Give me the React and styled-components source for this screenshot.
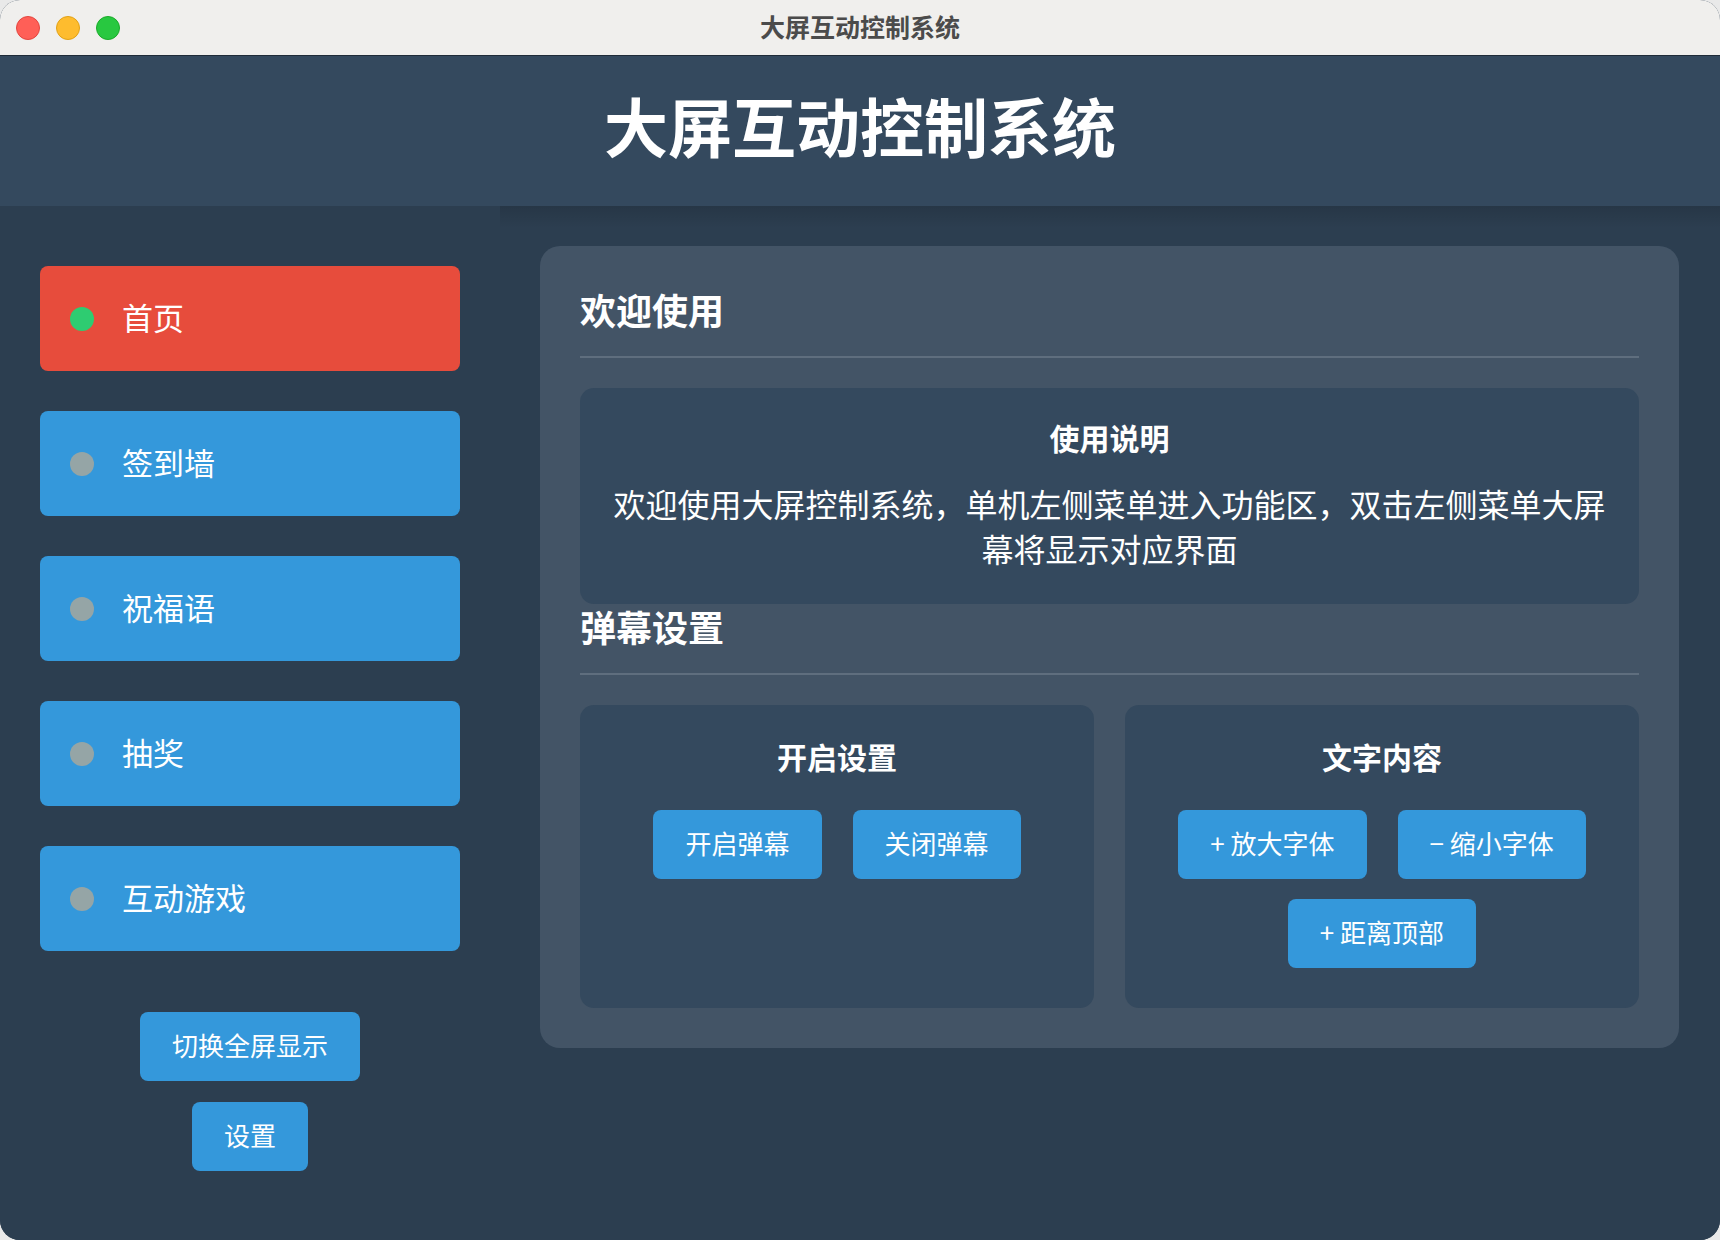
import React, { useState } from "react";
import styled, { createGlobalStyle } from "styled-components";

const GlobalStyle = createGlobalStyle`
    html, body{
        margin:0;
        padding:0;
        background:#e9e9e9;
    }
    *{
        box-sizing:border-box;
    }
    body{
        font-family:"Noto Sans CJK SC","Noto Sans",sans-serif;
    }
`;

const Window = styled.div`
    width:1720px;
    height:1240px;
    display:flex;
    flex-direction:column;
    border-radius:20px;
    overflow:hidden;
    background:#2c3e50;
`;

const TitleBar = styled.div`
    height:56px;
    flex:none;
    position:relative;
    display:flex;
    align-items:center;
    justify-content:center;
    padding-bottom:4px;
    background:#f0efed;
    border-bottom:1px solid #1f2b38;
    color:#4b4b4b;
    font-size:25px;
    font-weight:700;
`;

const Lights = styled.div`
    position:absolute;
    left:16px;
    top:16px;
    display:flex;
    gap:16px;
`;

const Light = styled.span`
    width:24px;
    height:24px;
    border-radius:50%;
    background:${p => p.color};
    border:1px solid ${p => p.edge};
`;

const Header = styled.header`
    height:150px;
    flex:none;
    display:flex;
    align-items:center;
    justify-content:center;
    padding-bottom:14px;
    background:#34495e;
    color:#fff;
    font-size:64px;
    font-weight:700;
`;

const Body = styled.div`
    flex:1;
    display:flex;
    min-height:0;
`;

const Sidebar = styled.aside`
    width:500px;
    flex:none;
    display:flex;
    flex-direction:column;
    padding:60px 40px 0;
    background:#2c3e50;
`;

const Menu = styled.nav`
    display:flex;
    flex-direction:column;
    gap:40px;
`;

const MenuItem = styled.div`
    height:105px;
    display:flex;
    align-items:center;
    gap:28px;
    padding:0 30px;
    border-radius:8px;
    background:${p => (p.active ? "#e74c3c" : "#3498db")};
    color:#fff;
    font-size:31px;
    cursor:pointer;
`;

const Label = styled.span`
    padding-bottom:5px;
`;

const Dot = styled.span`
    width:24px;
    height:24px;
    border-radius:50%;
    flex:none;
    background:${p => (p.active ? "#2ecc71" : "#95a5a6")};
`;

const Tools = styled.div`
    margin-top:61px;
    display:flex;
    flex-direction:column;
    align-items:center;
    gap:21px;
`;

const Button = styled.button`
    border:none;
    border-radius:8px;
    background:#3498db;
    color:#fff;
    font-family:inherit;
    font-size:26px;
    line-height:37px;
    padding:14px 32px 18px;
    cursor:pointer;
`;

const Main = styled.main`
    flex:1;
    padding:40px 41px 40px 40px;
    background:linear-gradient(rgba(0,0,0,0.12), rgba(0,0,0,0) 22px), #2c3e50;
`;

const Card = styled.section`
    background:#435466;
    border-radius:20px;
    padding:41px 40px 40px;
`;

const SectionTitle = styled.h2`
    margin:0 0 30px;
    font-size:36px;
    line-height:44px;
    font-weight:700;
    color:#fff;
    padding-bottom:25px;
    border-bottom:2px solid #5f6e7e;
`;

const Panel = styled.div`
    background:#34495e;
    border-radius:14px;
    padding:${p => p.pad || "30px 30px 33px"};
    color:#fff;
    text-align:center;
`;

const PanelTitle = styled.h3`
    margin:0 0 ${p => p.gap || 25}px;
    font-size:30px;
    line-height:38px;
    font-weight:700;
`;

const Text = styled.p`
    margin:0;
    font-size:32px;
    line-height:45px;
`;

const Grid = styled.div`
    display:grid;
    grid-template-columns:1fr 1fr;
    gap:31px;
`;

const ButtonRow = styled.div`
    display:flex;
    flex-wrap:wrap;
    justify-content:center;
    column-gap:31px;
    row-gap:20px;
`;

const menu = ["首页", "签到墙", "祝福语", "抽奖", "互动游戏"];

export default function App(){
    const [current,setCurrent] = useState(0);

    return(
        <>
        <GlobalStyle/>
        <Window>
            <TitleBar>
                <Lights>
                    <Light color="#ff5f57" edge="#e2463f"/>
                    <Light color="#febc2e" edge="#e1a116"/>
                    <Light color="#28c840" edge="#1aab29"/>
                </Lights>
                大屏互动控制系统
            </TitleBar>
            <Header>大屏互动控制系统</Header>
            <Body>
                <Sidebar>
                    <Menu>
                        {menu.map((m,i)=>(
                            <MenuItem key={m} active={i===current} onClick={()=>setCurrent(i)}>
                                <Dot active={i===current}/>
                                <Label>{m}</Label>
                            </MenuItem>
                        ))}
                    </Menu>
                    <Tools>
                        <Button>切换全屏显示</Button>
                        <Button>设置</Button>
                    </Tools>
                </Sidebar>
                <Main>
                    <Card>
                        <SectionTitle>欢迎使用</SectionTitle>
                        <Panel>
                            <PanelTitle>使用说明</PanelTitle>
                            <Text>欢迎使用大屏控制系统，单机左侧菜单进入功能区，双击左侧菜单大屏幕将显示对应界面</Text>
                        </Panel>
                        <SectionTitle>弹幕设置</SectionTitle>
                        <Grid>
                            <Panel pad="32px 30px 40px">
                                <PanelTitle gap={35}>开启设置</PanelTitle>
                                <ButtonRow>
                                    <Button>开启弹幕</Button>
                                    <Button>关闭弹幕</Button>
                                </ButtonRow>
                            </Panel>
                            <Panel pad="32px 30px 40px">
                                <PanelTitle gap={35}>文字内容</PanelTitle>
                                <ButtonRow>
                                    <Button>+ 放大字体</Button>
                                    <Button>− 缩小字体</Button>
                                    <Button>+ 距离顶部</Button>
                                </ButtonRow>
                            </Panel>
                        </Grid>
                    </Card>
                </Main>
            </Body>
        </Window>
        </>
    );
}
